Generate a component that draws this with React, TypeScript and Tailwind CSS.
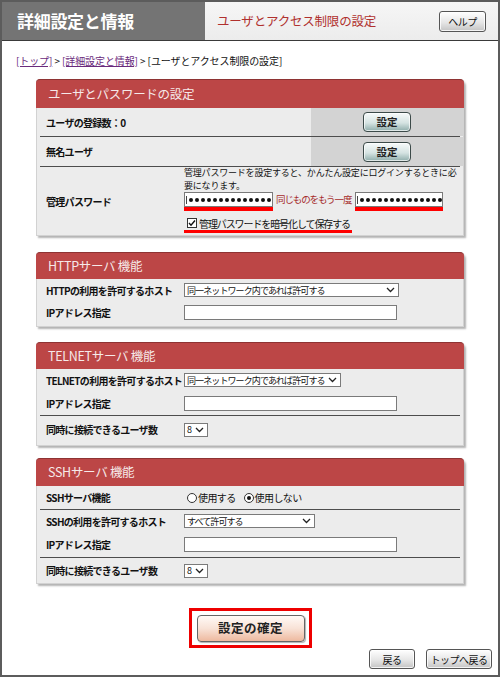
import React from "react";

function Chevron() {
  return (
    <svg width="9" height="6" viewBox="0 0 9 6" className="shrink-0">
      <polyline points="1,1 4.5,4.5 8,1" fill="none" stroke="#222" strokeWidth="1.3" />
    </svg>
  );
}

function SelectBox({ text, width }: { text: string; width: string }) {
  return (
    <div
      className={`${width} h-[14px] flex items-center justify-between bg-white border border-[#7a7a7a] pl-[2px] pr-[3px] text-[9px] leading-none tracking-[-0.9px] text-[#111]`}
    >
      <span className="whitespace-nowrap">{text}</span>
      <Chevron />
    </div>
  );
}

function TextBox({ width }: { width: string }) {
  return <input type="text" readOnly className={`${width} h-[15px] bg-white border border-[#7a7a7a] outline-none`} />;
}

const DOTS = Array.from({ length: 14 });

function PasswordBox({ width }: { width: string }) {
  return (
    <div className="flex flex-col">
      <div className={`${width} h-[15px] flex items-center gap-[2px] overflow-hidden bg-white border border-[#7a7a7a] pl-[1px]`}>
        <span className="w-px h-[8px] bg-[#444]" />
        {DOTS.map((_, i) => (
          <span key={i} className="w-[4px] h-[4px] shrink-0 rounded-full bg-[#111]" />
        ))}
      </div>
      <div className="h-[4px] bg-[#ff0000]" />
    </div>
  );
}

function TealButton({ children }: { children: React.ReactNode }) {
  return (
    <button className="w-[48px] h-[20px] rounded-[4px] border border-[#3c4a49] bg-[linear-gradient(to_bottom,#f7fafa,#d5e3e2_55%,#8fadab)] text-[10.5px] font-bold text-[#222] shadow-[inset_0_0_0_1px_rgba(255,255,255,0.7)]">
      {children}
    </button>
  );
}

function GrayButton({ children, width }: { children: React.ReactNode; width: string }) {
  return (
    <button
      className={`${width} h-[20px] rounded-[3px] border border-[#555] bg-[linear-gradient(to_bottom,#ffffff,#e6e6e6_55%,#c4c4c4)] text-[10px] tracking-[-0.5px] text-[#111] shadow-[inset_0_0_0_1px_rgba(255,255,255,0.8)]`}
    >
      {children}
    </button>
  );
}

function Header({ title, height }: { title: string; height: string }) {
  return (
    <div
      className={`${height} -mx-px flex items-center rounded-t-[4px] bg-[#bc4646] border-t border-[#8e3333] pl-[12px] text-[12.5px] text-[#f6e9e9] tracking-[-0.3px]`}
    >
      {title}
    </div>
  );
}

function Row({ label, height, children }: { label: string; height: string; children?: React.ReactNode }) {
  return (
    <div className={`${height} flex items-center`}>
      <div className="w-[147px] pl-[9px] text-[10px] font-bold tracking-[-0.7px] text-[#111] whitespace-nowrap">{label}</div>
      <div className="flex-1 flex items-center">{children}</div>
    </div>
  );
}

function Divider() {
  return <div className="mx-[3px] h-px bg-[#4d4d4d]" />;
}

function Radio({ checked }: { checked?: boolean }) {
  return (
    <span className="w-[10px] h-[10px] rounded-full border border-[#333] bg-white flex items-center justify-center">
      {checked && <span className="w-[4px] h-[4px] rounded-full bg-[#111]" />}
    </span>
  );
}

export default function App() {
  return (
    <div className="w-[500px] h-[677px] flex flex-col bg-white border-2 border-[#5c5c5c] font-['Noto_Sans_CJK_JP','Noto_Sans',sans-serif] text-[#111]">
      {/* header */}
      <div className="h-[39px] flex border-b border-[#3a3a3a]">
        <div className="w-[203px] bg-[#747474] flex items-center pl-[15px] text-[17px] font-bold text-white tracking-[-0.3px]">
          詳細設定と情報
        </div>
        <div className="flex-1 bg-[linear-gradient(to_bottom,#f6f6f6,#ececec)] flex items-center justify-between pl-[12px] pr-[12px]">
          <span className="text-[12.5px] text-[#b0302e] tracking-[-0.2px]">ユーザとアクセス制限の設定</span>
          <GrayButton width="w-[47px] h-[21px]">ヘルプ</GrayButton>
        </div>
      </div>

      {/* breadcrumb */}
      <div className="mt-[14px] h-[12px] leading-[12px] pl-[14px] text-[10px] tracking-[-0.1px] whitespace-nowrap">
        <a className="text-[#6a2a7c] underline">[トップ]</a>
        <span>&nbsp;&gt;&nbsp;</span>
        <a className="text-[#6a2a7c] underline">[詳細設定と情報]</a>
        <span>&nbsp;&gt;&nbsp;[ユーザとアクセス制限の設定]</span>
      </div>

      {/* user & password */}
      <div className="mt-[12px] ml-[34px] w-[428px] rounded-t-[5px] bg-[#ececec] border-x border-b border-[#d2d2d2] shadow-[2px_2px_2px_rgba(0,0,0,0.3)]">
        <Header title="ユーザとパスワードの設定" height="h-[29px]" />
        <div className="h-[28px] flex">
          <div className="flex-1 flex items-center pl-[9px] text-[10px] font-bold tracking-[-0.7px]">ユーザの登録数：0</div>
          <div className="w-[152px] bg-[#d3d3d3] flex items-center justify-center">
            <TealButton>設定</TealButton>
          </div>
        </div>
        <Divider />
        <div className="h-[29px] flex">
          <div className="flex-1 flex items-center pl-[9px] text-[10px] font-bold tracking-[-0.7px]">無名ユーザ</div>
          <div className="w-[152px] bg-[#d3d3d3] flex items-center justify-center">
            <TealButton>設定</TealButton>
          </div>
        </div>
        <Divider />
        <div className="h-[68px] flex items-center">
          <div className="w-[147px] pl-[9px] text-[10px] font-bold tracking-[-0.7px]">管理パスワード</div>
          <div className="flex-1 h-full flex flex-col">
            <p className="-mt-[1px] text-[9px] leading-[13px] tracking-[-0.2px] whitespace-nowrap">
              管理パスワードを設定すると、かんたん設定にログインするときに必
              <br />
              要になります。
            </p>
            <div className="flex items-start">
              <PasswordBox width="w-[89px]" />
              <span className="ml-[3px] h-[15px] leading-[15px] text-[9.5px] tracking-[-1.1px] text-[#a52a2a] whitespace-nowrap">
                同じものをもう一度
              </span>
              <div className="ml-[4px]">
                <PasswordBox width="w-[88px]" />
              </div>
            </div>
            <div className="mt-[5px] w-[168px] flex flex-col">
              <div className="h-[14px] flex items-center pl-[3px] gap-[2px]">
                <svg width="10" height="10" viewBox="0 0 10 10" className="shrink-0">
                  <rect x="0.5" y="0.5" width="9" height="9" fill="#fff" stroke="#333" />
                  <polyline points="2,5 4,7.2 8,2.5" fill="none" stroke="#111" strokeWidth="1.4" />
                </svg>
                <span className="text-[10px] tracking-[-1.1px] whitespace-nowrap">管理パスワードを暗号化して保存する</span>
              </div>
              <div className="h-[3px] bg-[#ff0000]" />
            </div>
          </div>
        </div>
      </div>

      {/* HTTP */}
      <div className="mt-[16px] ml-[34px] w-[428px] rounded-t-[5px] bg-[#ececec] border-x border-b border-[#d2d2d2] shadow-[2px_2px_2px_rgba(0,0,0,0.3)] pb-[2px]">
        <Header title="HTTPサーバ 機能" height="h-[27px]" />
        <Row label="HTTPの利用を許可するホスト" height="h-[22px]">
          <SelectBox text="同一ネットワーク内であれば許可する" width="w-[215px]" />
        </Row>
        <Row label="IPアドレス指定" height="h-[23px]">
          <TextBox width="w-[213px]" />
        </Row>
      </div>

      {/* TELNET */}
      <div className="mt-[15px] ml-[34px] w-[428px] rounded-t-[5px] bg-[#ececec] border-x border-b border-[#d2d2d2] shadow-[2px_2px_2px_rgba(0,0,0,0.3)] pb-[2px]">
        <Header title="TELNETサーバ 機能" height="h-[27px]" />
        <Row label="TELNETの利用を許可するホスト" height="h-[22px]">
          <SelectBox text="同一ネットワーク内であれば許可する" width="w-[157px]" />
        </Row>
        <Row label="IPアドレス指定" height="h-[24px]">
          <TextBox width="w-[213px]" />
        </Row>
        <Divider />
        <Row label="同時に接続できるユーザ数" height="h-[27px]">
          <SelectBox text="8" width="w-[24px]" />
        </Row>
      </div>

      {/* SSH */}
      <div className="mt-[12px] ml-[34px] w-[428px] rounded-t-[5px] bg-[#ececec] border-x border-b border-[#d2d2d2] shadow-[2px_2px_2px_rgba(0,0,0,0.3)]">
        <Header title="SSHサーバ 機能" height="h-[28px]" />
        <Row label="SSHサーバ機能" height="h-[23px]">
          <div className="flex items-center pl-[3px] text-[10px] tracking-[-0.6px]">
            <Radio />
            <span className="ml-[1px]">使用する</span>
            <span className="ml-[8px]">
              <Radio checked />
            </span>
            <span className="ml-[1px]">使用しない</span>
          </div>
        </Row>
        <Divider />
        <Row label="SSHの利用を許可するホスト" height="h-[22px]">
          <SelectBox text="すべて許可する" width="w-[131px]" />
        </Row>
        <Row label="IPアドレス指定" height="h-[25px]">
          <TextBox width="w-[213px]" />
        </Row>
        <Divider />
        <Row label="同時に接続できるユーザ数" height="h-[25px]">
          <SelectBox text="8" width="w-[24px]" />
        </Row>
      </div>

      {/* confirm */}
      <div className="mt-[24px] ml-[187px] w-[123px] h-[40px] border-[3px] border-[#ee0000] flex items-center justify-center">
        <button className="w-[108px] h-[27px] rounded-[4px] border border-[#666] bg-[linear-gradient(to_bottom,#fffaf7,#f8e2d6_50%,#eeb99f)] text-[12.5px] font-bold tracking-[0.5px] text-[#222] shadow-[1px_1px_1px_rgba(0,0,0,0.3)]">
          設定の確定
        </button>
      </div>

      <div className="mt-[1px] flex justify-end gap-[11px] pr-[6px]">
        <GrayButton width="w-[46px]">戻る</GrayButton>
        <GrayButton width="w-[66px]">トップへ戻る</GrayButton>
      </div>
    </div>
  );
}
